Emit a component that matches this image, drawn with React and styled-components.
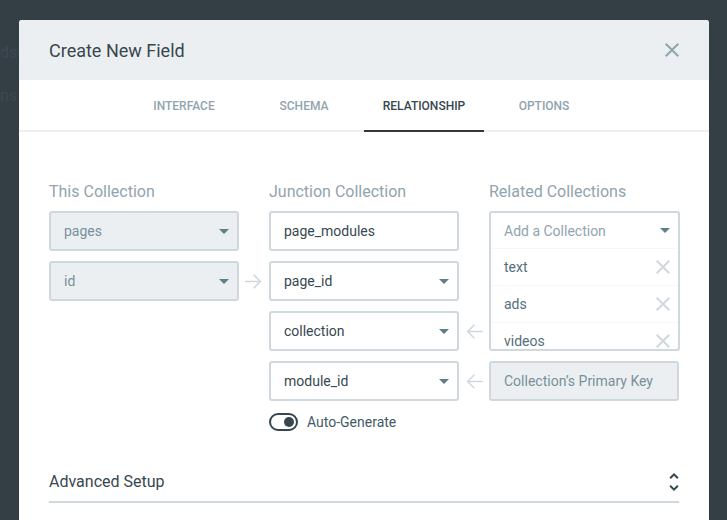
import React from 'react'
import styled, { createGlobalStyle } from 'styled-components'

const GlobalStyle = createGlobalStyle`
    html, body {
        margin: 0;
        height: 100%;
        overflow: hidden;
        background-color: #333e45;
        font-family: Roboto, "Liberation Sans", sans-serif;
        -webkit-font-smoothing: antialiased;
    }
`

// page behind the dialog
const Backdrop = styled.div`
    height: 520px;
    overflow: hidden;
    position: relative;
`
const BackList = styled.div`
    display: flex;
    flex-direction: column;
    gap: 27px;
    padding-top: 45px;
    margin-left: -38px;
    font-size: 16px;
    line-height: 16px;
    color: #3c4a52;
`
const BackItem = styled.div`
    padding-left: ${(p) => p.$indent || 0}px;
`

// dialog
const Modal = styled.div`
    position: absolute;
    top: 20px;
    left: 19px;
    width: 690px;
    height: 520px;
    background-color: #fff;
    border-radius: 3px 3px 0 0;
    overflow: hidden;
`
const Header = styled.div`
    height: 60px;
    padding: 0 30px;
    background-color: #eceff1;
    display: flex;
    align-items: center;
    justify-content: space-between;
`
const Title = styled.h1`
    margin: 0;
    font-size: 18px;
    font-weight: 400;
    color: #37474f;
`
const CloseBtn = styled.svg`
    width: 24px;
    height: 24px;
    margin-right: -5px;
    fill: #90a4ae;
`
const Tabs = styled.div`
    height: 50px;
    border-bottom: 2px solid #eceff1;
    display: flex;
    justify-content: center;
`
const Tab = styled.div`
    width: 120px;
    height: 52px;
    box-sizing: border-box;
    padding-top: 1px;
    display: flex;
    align-items: center;
    justify-content: center;
    font-size: 12px;
    font-weight: 500;
    color: ${(p) => (p.$active ? '#37474f' : '#90a4ae')};
    border-bottom: 2px solid ${(p) => (p.$active ? '#37373a' : 'transparent')};
`
const Body = styled.div`
    padding: 50px 30px 0;
`
const Grid = styled.div`
    display: grid;
    grid-template-columns: 190px 190px 190px;
    column-gap: 30px;
`
const Column = styled.div`
    display: flex;
    flex-direction: column;
    gap: 10px;
    min-width: 0;
`
const Label = styled.div`
    height: 20px;
    margin-bottom: -1px;
    line-height: 20px;
    font-size: 16px;
    color: #90a4ae;
`
const Slot = styled.div`
    position: relative;
    height: ${(p) => p.$height || 40}px;
`
const Field = styled.div`
    box-sizing: border-box;
    height: 40px;
    padding: 0 8px 0 13px;
    display: flex;
    align-items: center;
    justify-content: space-between;
    border: 2px solid #cfd8dc;
    border-radius: 3px;
    font-size: 14px;
    background-color: ${(p) => (p.$off ? '#eceff1' : '#fff')};
    color: ${(p) => (p.$off ? '#78909c' : '#37474f')};
`
const Caret = styled.span`
    width: 0;
    height: 0;
    border-left: 5px solid transparent;
    border-right: 5px solid transparent;
    border-top: 5px solid #607d8b;
`
const Arrow = styled.svg`
    position: absolute;
    top: ${(p) => p.$top || 9}px;
    width: 23px;
    height: 23px;
    fill: #cfd8dc;
    stroke: #cfd8dc;
    stroke-width: 0.4;
    ${(p) => (p.$side === 'right' ? 'right: -26px;' : 'left: -26px;')}
`

// related collections list, its last row is cut off by the box
const ListBox = styled.div`
    box-sizing: border-box;
    height: 140px;
    width: 191px;
    border: 2px solid #cfd8dc;
    border-radius: 3px;
    overflow: hidden;
`
const ListHead = styled.div`
    box-sizing: border-box;
    height: 36px;
    padding: 0 8px 0 13px;
    display: flex;
    align-items: center;
    justify-content: space-between;
    font-size: 14px;
    color: #90a4ae;
    border-bottom: 1px solid #f5f7f8;
`
const ListRow = styled.div`
    box-sizing: border-box;
    height: 37px;
    padding: 0 3px 0 13px;
    display: flex;
    align-items: center;
    justify-content: space-between;
    font-size: 14px;
    color: #546e7a;
    border-bottom: 1px solid #f5f7f8;
`
const RemoveIcon = styled.svg`
    width: 24px;
    height: 24px;
    fill: #cfd8dc;
    flex: none;
`
const ToggleRow = styled.div`
    margin-top: 1px;
    height: 20px;
    display: flex;
    align-items: center;
    gap: 9px;
    font-size: 14px;
    color: #455a64;
`
const Toggle = styled.span`
    box-sizing: border-box;
    width: 29px;
    height: 18px;
    border: 2px solid #37474f;
    border-radius: 9px;
    display: flex;
    align-items: center;
    justify-content: flex-end;
    padding-right: 2px;
`
const Knob = styled.span`
    width: 10px;
    height: 10px;
    border-radius: 50%;
    background-color: #37474f;
`
const Advanced = styled.div`
    margin-top: 31px;
    height: 40px;
    box-sizing: border-box;
    border-bottom: 2px solid #cfd8dc;
    display: flex;
    align-items: center;
    justify-content: space-between;
    font-size: 16px;
    color: #37474f;
    padding-bottom: 2px;
`
const Unfold = styled.svg`
    width: 24px;
    height: 24px;
    margin: 2px -7px 0 0;
    fill: #37474f;
`

const closePath = 'M19 6.41L17.59 5 12 10.59 6.41 5 5 6.41 10.59 12 5 17.59 6.41 19 12 13.41 17.59 19 19 17.59 13.41 12z'
const backPath = 'M20.5 11.4H6.3l5.9-5.9-.9-.9L3.9 12l7.4 7.4.9-.9-5.9-5.9h14.2z'
const forwardPath = 'M3.5 11.4h14.2l-5.9-5.9.9-.9 7.4 7.4-7.4 7.4-.9-.9 5.9-5.9H3.5z'

const App = () => {
    const related = ['text', 'ads', 'videos']

    return (
        <Backdrop>
            <GlobalStyle />
            <BackList>
                <BackItem $indent={13}>Fields</BackItem>
                <BackItem>Options</BackItem>
            </BackList>
            <Modal>
                <Header>
                    <Title>Create New Field</Title>
                    <CloseBtn viewBox="0 0 24 24"><path d={closePath} /></CloseBtn>
                </Header>
                <Tabs>
                    <Tab>INTERFACE</Tab>
                    <Tab>SCHEMA</Tab>
                    <Tab $active>RELATIONSHIP</Tab>
                    <Tab>OPTIONS</Tab>
                </Tabs>
                <Body>
                    <Grid>
                        <Column>
                            <Label>This Collection</Label>
                            <Field $off>pages<Caret /></Field>
                            <Slot>
                                <Field $off>id<Caret /></Field>
                                <Arrow $side="right" viewBox="0 0 24 24"><path d={forwardPath} /></Arrow>
                            </Slot>
                        </Column>
                        <Column>
                            <Label>Junction Collection</Label>
                            <Field>page_modules</Field>
                            <Field>page_id<Caret /></Field>
                            <Field>collection<Caret /></Field>
                            <Field>module_id<Caret /></Field>
                            <ToggleRow>
                                <Toggle><Knob /></Toggle>
                                Auto-Generate
                            </ToggleRow>
                        </Column>
                        <Column>
                            <Label>Related Collections</Label>
                            <Slot $height={140}>
                                <ListBox>
                                    <ListHead>Add a Collection<Caret /></ListHead>
                                    {related.map((name) => (
                                        <ListRow key={name}>
                                            {name}
                                            <RemoveIcon viewBox="0 0 24 24"><path d={closePath} /></RemoveIcon>
                                        </ListRow>
                                    ))}
                                </ListBox>
                                <Arrow $side="left" $top={109} viewBox="0 0 24 24"><path d={backPath} /></Arrow>
                            </Slot>
                            <Slot>
                                <Field $off>Collection’s Primary Key</Field>
                                <Arrow $side="left" viewBox="0 0 24 24"><path d={backPath} /></Arrow>
                            </Slot>
                        </Column>
                    </Grid>
                    <Advanced>
                        Advanced Setup
                        <Unfold viewBox="0 0 24 24">
                            <path d="M12 5.83L15.17 9l1.41-1.41L12 3 7.41 7.59 8.83 9 12 5.83zm0 12.34L8.83 15l-1.41 1.41L12 21l4.59-4.59L15.17 15 12 18.17z" />
                        </Unfold>
                    </Advanced>
                </Body>
            </Modal>
        </Backdrop>
    )
}

export default App
